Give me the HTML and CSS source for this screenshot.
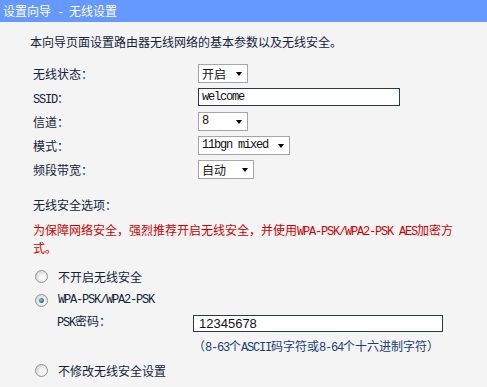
FILE: index.html
```html
<!DOCTYPE html>
<html lang="zh-CN">
<head>
<meta charset="utf-8">
<title>设置向导 - 无线设置</title>
<link rel="stylesheet" href="styles.css">
</head>
<body>
<div class="header">设置向导<span class="m"> - </span>无线设置</div>
<p class="intro">本向导页面设置路由器无线网络的基本参数以及无线安全。</p>
<div class="form">
  <div class="row"><span class="label">无线状态：</span><span class="select w50"><span class="val">开启</span><span class="arrow"></span></span></div>
  <div class="row"><span class="label"><span class="m">SSID</span>：</span><span class="textbox ssid"><span class="m">welcome</span></span></div>
  <div class="row"><span class="label">信道：</span><span class="select w50"><span class="val m">8</span><span class="arrow"></span></span></div>
  <div class="row"><span class="label">模式：</span><span class="select w92"><span class="val m">11bgn mixed</span><span class="arrow"></span></span></div>
  <div class="row"><span class="label">频段带宽：</span><span class="select w56"><span class="val">自动</span><span class="arrow"></span></span></div>
</div>
<div class="sec-title">无线安全选项：</div>
<p class="warn"><span>为保障网络安全，强烈推荐开启无线安全，并使用</span><span class="m">WPA-PSK/WPA2-PSK AES</span><span>加密方</span><span>式。</span></p>
<div class="options">
  <div class="opt"><span class="radio"></span><span>不开启无线安全</span></div>
  <div class="opt"><span class="radio checked"></span><span class="m">WPA-PSK/WPA2-PSK</span></div>
  <div class="psk"><span class="psk-label"><span class="m">PSK</span>密码：</span><span class="textbox psk-input">12345678</span></div>
  <div class="hint">（<span class="m">8-63</span>个<span class="m">ASCII</span>码字符或<span class="m">8-64</span>个十六进制字符）</div>
  <div class="opt"><span class="radio"></span><span>不修改无线安全设置</span></div>
</div>
</body>
</html>
```

FILE: styles.css
```css
html, body {
  margin: 0;
  padding: 0;
}
body {
  background: #f4f4f4;
  font-family: "Noto Sans CJK SC", "Liberation Sans", sans-serif;
  font-size: 12px;
  color: #10243c;
  width: 487px;
  height: 387px;
  overflow: hidden;
}
.m {
  font-family: "Liberation Mono", "Noto Sans CJK SC", monospace;
  letter-spacing: -1.2px;
}
.header {
  height: 22px;
  line-height: 22px;
  background: #6699ff;
  color: #ffffff;
  padding-left: 3px;
}
.intro {
  margin: 12px 0 0 30px;
  line-height: 16px;
}
.form {
  margin-top: 14px;
  padding-left: 33px;
}
.row {
  display: flex;
  align-items: flex-start;
  height: 24px;
}
.label {
  width: 165px;
  line-height: 19px;
  flex: none;
}
.select {
  box-sizing: border-box;
  height: 19px;
  display: flex;
  align-items: center;
  justify-content: space-between;
  background: #ffffff;
  border: 1px solid #a6a6a6;
  padding: 0 5px 0 3px;
  color: #111;
}
.select .val {
  line-height: 17px;
}
.w50 { width: 50px; }
.w92 { width: 92px; }
.w56 { width: 56px; }
.arrow {
  width: 0;
  height: 0;
  border-left: 3.5px solid transparent;
  border-right: 3.5px solid transparent;
  border-top: 4px solid #000;
  margin-top: 1px;
}
.textbox {
  box-sizing: border-box;
  background: #ffffff;
  border: 1px solid #253a4b;
  color: #111;
  display: flex;
  align-items: center;
}
.ssid {
  width: 202px;
  height: 18px;
  padding-left: 3px;
}
.sec-title {
  margin: 13px 0 0 33px;
  line-height: 16px;
}
.warn {
  margin: 9px 0 0 33px;
  width: 426px;
  line-height: 15px;
  color: #cc0000;
}
.options {
  margin-top: 9px;
}
.opt {
  display: flex;
  align-items: center;
  height: 24px;
  padding-left: 35px;
}
.radio {
  box-sizing: border-box;
  width: 13px;
  height: 13px;
  border-radius: 50%;
  border: 1px solid #939393;
  background: radial-gradient(circle at 62% 62%, #ffffff 0%, #f2f2f0 35%, #cfcfcb 85%);
  margin-right: 10px;
  flex: none;
  display: flex;
  align-items: center;
  justify-content: center;
}
.radio.checked::after {
  content: "";
  width: 5px;
  height: 5px;
  border-radius: 50%;
  background: radial-gradient(circle at 40% 40%, #8cc4e0 0%, #2f77a4 55%, #1a4f77 100%);
}
.psk {
  display: flex;
  align-items: flex-start;
  height: 22px;
  padding-left: 57px;
}
.psk-label {
  width: 136px;
  line-height: 18px;
  flex: none;
}
.psk-input {
  width: 250px;
  height: 17px;
  margin-top: 2.5px;
  padding-left: 5px;
  font-family: "Liberation Sans", Arial, sans-serif;
  font-size: 13px;
}
.hint {
  height: 24px;
  line-height: 24px;
  padding-left: 193px;
  color: #173e78;
}
```
